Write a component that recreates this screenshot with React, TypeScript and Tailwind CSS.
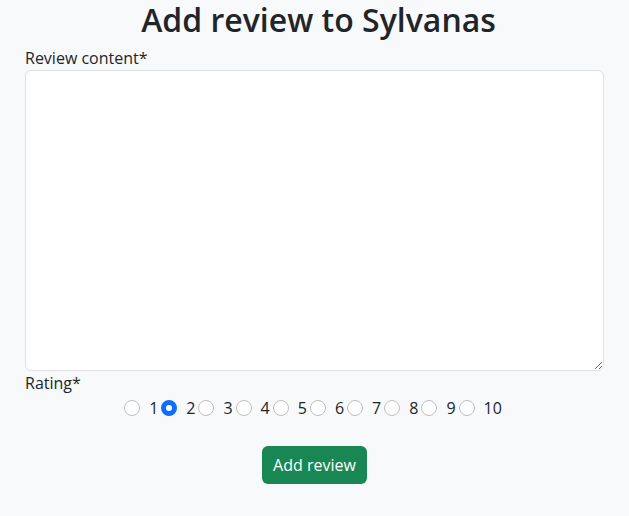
import { useState } from "react";

const ratings = [1, 2, 3, 4, 5, 6, 7, 8, 9, 10];

export default function App() {
  const [rating, setRating] = useState(2);

  return (
    <div className="min-h-[516px] bg-[#f8f9fa] text-[#212529] font-['Segoe_UI','Open_Sans',sans-serif]">
      <div className="px-[25px]">
        <h1 className="mb-[7px] pl-[8px] text-center text-[32px] font-semibold leading-[39px]">
          Add review to Sylvanas
        </h1>

        <label htmlFor="content" className="block text-base leading-6">
          Review content*
        </label>
        <textarea
          id="content"
          className="block h-[301px] w-full rounded-md border border-[#dee2e6] bg-white px-3 py-1.5 text-base outline-none"
        />

        <label className="block text-base leading-6">Rating*</label>
        <div className="flex justify-center pt-px">
          {ratings.map((r) => (
            <label key={r} className="mr-[3px] flex h-6 items-center">
              <input
                type="radio"
                name="rating"
                checked={rating === r}
                onChange={() => setRating(r)}
                className={`m-0 h-4 w-4 appearance-none rounded-full border ${
                  rating === r
                    ? "border-[5px] border-[#0d6efd] bg-white"
                    : "border-[#bfbfbf] bg-white"
                }`}
              />
              <span className="ml-[9px] text-base">{r}</span>
            </label>
          ))}
        </div>

        <div className="mt-[26px] flex justify-center">
          <button className="h-[38px] rounded-md bg-[#198754] px-[11px] text-base text-white">
            Add review
          </button>
        </div>
      </div>
    </div>
  );
}
